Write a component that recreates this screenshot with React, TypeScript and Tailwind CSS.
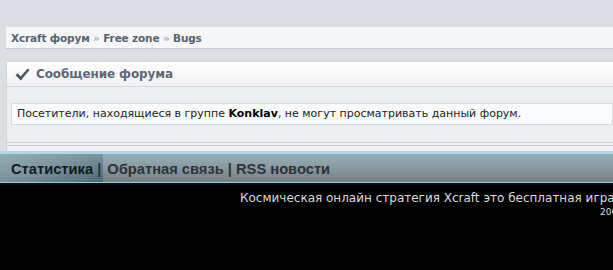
import React from "react";

export default function App() {
  const verdana = { fontFamily: '"DejaVu Sans", Verdana, sans-serif' };
  const tahoma = { fontFamily: '"Liberation Sans", Arial, sans-serif' };
  return (
    <div className="w-[613px] h-[270px] overflow-hidden bg-[#dbdee2]" style={verdana}>
      <div className="h-[27px]" />
      {/* breadcrumb */}
      <div className="ml-[6px] h-[22px] bg-[#f5f7f9] border-b border-[#c3c7cc] flex items-center pl-[5px] pt-[3px]">
        <span className="text-[10.5px] font-bold text-[#59636f] tracking-[-0.15px]">
          Xcraft форум <span className="text-[#a9b0b8]">»</span> Free zone <span className="text-[#a9b0b8]">»</span> Bugs
        </span>
      </div>
      <div className="h-[12px]" />
      {/* panel */}
      <div className="ml-[6px] border-l border-t border-[#d3d6da] rounded-tl-[4px] bg-[#eceef1]">
        <div className="h-[25px] flex items-center pl-[8px] gap-[6px] bg-gradient-to-b from-[#ffffff] to-[#f1f2f4] border-b border-[#d3d6da]">
          <svg width="15" height="13" viewBox="0 0 15 13">
            <path d="M0.5 7.2 L3 5.2 L5.6 8.6 L12.8 0.6 L14.5 2 L5.8 12.4 Z" fill="#4c5664" />
          </svg>
          <span className="text-[12px] font-bold text-[#5b6878] tracking-[-0.1px]">Сообщение форума</span>
        </div>
        <div className="pt-[16px] pb-[17px] pl-[4px]">
          <div className="h-[22px] bg-[#fafbfc] border border-[#d6d9dd] flex items-center pl-[5px]">
            <span className="text-[11px] text-[#222] whitespace-nowrap">
              Посетители, находящиеся в группе <b className="text-black">Konklav</b>, не могут просматривать данный форум.
            </span>
          </div>
        </div>
        <div className="h-[1px] bg-[#c9cdd2]" />
        <div className="h-[2px] bg-[#f3f4f6]" />
        <div className="h-[1px] bg-[#c9cdd2]" />
        <div className="h-[5px] bg-[#eef0f2]" />
      </div>
      {/* footer nav */}
      <div className="h-[3px] bg-[#a8dcec]" />
      <div className="h-[28px] bg-gradient-to-b from-[#96aeb6] via-[#8799a0] to-[#767f85] flex items-end">
        <div className="h-full flex items-center pl-[11px] pr-[2px] pt-[2px] bg-gradient-to-br from-[#97adb6] via-[#7b939c] to-[#4d6a77]">
          <span className="text-[14.7px] font-bold text-[#0f1b22] whitespace-nowrap" style={tahoma}>
            Статистика <span className="text-[#2c3438]">|</span>
          </span>
        </div>
        <div className="h-full flex items-center pl-[4px] pt-[2px]">
          <span className="text-[14.7px] font-bold text-[#2d3336] whitespace-nowrap" style={tahoma}>
            Обратная связь | RSS новости
          </span>
        </div>
      </div>
      <div className="h-[1px] bg-[#9fc9d6]" />
      <div className="h-[2px] bg-[#0a0d18]" />
      {/* black footer */}
      <div className="h-[85px] bg-black relative overflow-hidden">
        <div className="absolute left-[240px] top-[4px] whitespace-nowrap text-[12px] text-[#dcdcdc]" style={verdana}>
          Космическая онлайн стратегия Xcraft это бесплатная игра
        </div>
        <div className="absolute left-[600px] top-[21px] whitespace-nowrap text-[9px] text-[#dcdcdc]" style={verdana}>
          2007-2012
        </div>
      </div>
    </div>
  );
}
